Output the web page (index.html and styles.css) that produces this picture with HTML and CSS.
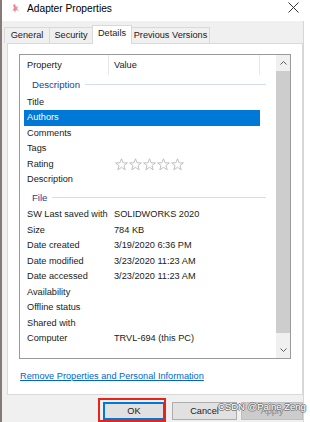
FILE: index.html
```html
<!DOCTYPE html>
<html>
<head>
  <title>Adapter Properties</title>
  <link rel="stylesheet" href="styles.css">
</head>
<body>
  <div class="window">
    <div class="titlebar">
      <svg class="app-icon" width="7" height="9" viewBox="0 0 7 9">
        <path d="M3 0 L4 3 L6 2 L5 5 L7 7 L4 6 L3 9 L2 6 L0 7 L2 4 L1 1 Z" fill="#e88a96"/>
      </svg>
      <span class="title">Adapter Properties</span>
      <svg class="close" width="11" height="11" viewBox="0 0 11 11">
        <path d="M0.5 0.5 L10.5 10.5 M10.5 0.5 L0.5 10.5" stroke="#333" stroke-width="1"/>
      </svg>
    </div>

    <div class="body">
      <div class="tabs">
        <div class="tab tab-general">General</div>
        <div class="tab tab-security">Security</div>
        <div class="tab tab-details active">Details</div>
        <div class="tab tab-prev">Previous Versions</div>
      </div>

      <div class="panel">
        <div class="listbox">
          <div class="list">
            <div class="header">
              <div class="hcell hcell-prop">Property</div>
              <div class="hcell hcell-value">Value</div>
            </div>

            <div class="group"><span>Description</span><i class="rule"></i></div>
            <div class="row"><span class="prop">Title</span><span class="val"></span></div>
            <div class="row selected"><span class="prop">Authors</span><span class="val"></span></div>
            <div class="row"><span class="prop">Comments</span><span class="val"></span></div>
            <div class="row"><span class="prop">Tags</span><span class="val"></span></div>
            <div class="row">
              <span class="prop">Rating</span>
              <span class="val">
                <svg class="stars" width="70" height="13" viewBox="0 0 70 13">
                  <g fill="none" stroke="#b9b9b9" stroke-width="0.9">
                    <polygon points="6.5,0.8 8.1,4.8 12.4,4.9 9,7.6 10.2,11.8 6.5,9.4 2.8,11.8 4,7.6 0.6,4.9 4.9,4.8"/>
                    <polygon transform="translate(14 0)" points="6.5,0.8 8.1,4.8 12.4,4.9 9,7.6 10.2,11.8 6.5,9.4 2.8,11.8 4,7.6 0.6,4.9 4.9,4.8"/>
                    <polygon transform="translate(28 0)" points="6.5,0.8 8.1,4.8 12.4,4.9 9,7.6 10.2,11.8 6.5,9.4 2.8,11.8 4,7.6 0.6,4.9 4.9,4.8"/>
                    <polygon transform="translate(42 0)" points="6.5,0.8 8.1,4.8 12.4,4.9 9,7.6 10.2,11.8 6.5,9.4 2.8,11.8 4,7.6 0.6,4.9 4.9,4.8"/>
                    <polygon transform="translate(56 0)" points="6.5,0.8 8.1,4.8 12.4,4.9 9,7.6 10.2,11.8 6.5,9.4 2.8,11.8 4,7.6 0.6,4.9 4.9,4.8"/>
                  </g>
                </svg>
              </span>
            </div>
            <div class="row"><span class="prop">Description</span><span class="val"></span></div>

            <div class="group"><span>File</span><i class="rule"></i></div>
            <div class="row"><span class="prop">SW Last saved with</span><span class="val">SOLIDWORKS 2020</span></div>
            <div class="row"><span class="prop">Size</span><span class="val">784 KB</span></div>
            <div class="row"><span class="prop">Date created</span><span class="val">3/19/2020 6:36 PM</span></div>
            <div class="row"><span class="prop">Date modified</span><span class="val">3/23/2020 11:23 AM</span></div>
            <div class="row"><span class="prop">Date accessed</span><span class="val">3/23/2020 11:23 AM</span></div>
            <div class="row"><span class="prop">Availability</span><span class="val"></span></div>
            <div class="row"><span class="prop">Offline status</span><span class="val"></span></div>
            <div class="row"><span class="prop">Shared with</span><span class="val"></span></div>
            <div class="row"><span class="prop">Computer</span><span class="val">TRVL-694 (this PC)</span></div>
          </div>

          <div class="scrollbar">
            <div class="arrow">
              <svg width="7" height="4" viewBox="0 0 7 4"><polyline points="0.5,3.5 3.5,0.5 6.5,3.5" fill="none" stroke="#606060"/></svg>
            </div>
            <div class="thumb"></div>
            <div class="track"></div>
            <div class="arrow">
              <svg width="7" height="4" viewBox="0 0 7 4"><polyline points="0.5,0.5 3.5,3.5 6.5,0.5" fill="none" stroke="#606060"/></svg>
            </div>
          </div>
        </div>

        <a class="link" href="#">Remove Properties and Personal Information</a>
      </div>

      <div class="buttons">
        <div class="btn btn-ok">OK</div>
        <div class="btn btn-cancel">Cancel</div>
        <div class="btn btn-apply">Apply</div>
      </div>
    </div>

    <div class="ok-mark"></div>
    <div class="watermark">CSDN @Paine Zeng</div>
  </div>
</body>
</html>
```

FILE: styles.css
```css
* {
  box-sizing: border-box;
}
body {
  margin: 0;
  background: #ffffff;
  font-family: "Liberation Sans", Arial, sans-serif;
  font-size: 9.2px;
  color: #1a1a1a;
}
.window {
  position: relative;
  width: 310px;
  height: 422px;
  border-left: 2px solid #85797a;
  overflow: hidden;
}

/* title bar */
.titlebar {
  height: 21px;
  display: flex;
  align-items: flex-start;
  padding-top: 3px;
  background: #ffffff;
}
.app-icon {
  margin-left: 10px;
  margin-top: 1px;
}
.title {
  margin-left: 8px;
  font-size: 10.2px;
  line-height: 11px;
  color: #000;
}
.close {
  margin-left: auto;
  margin-right: 11px;
  margin-top: -1px;
}

/* dialog body */
.body {
  width: 302px;
  height: 401px;
  background: #f0f0f0;
  border-right: 1px solid #d6d6d6;
}
.tabs {
  height: 22px;
  padding-top: 6px;
  padding-left: 2px;
  display: flex;
  align-items: flex-end;
}
.tab {
  height: 16px;
  line-height: 14px;
  text-align: center;
  border: 1px solid #d9d9d9;
  border-bottom: none;
  background: #f0f0f0;
  margin-right: -1px;
}
.tab-general { width: 46px; }
.tab-security { width: 44px; }
.tab-details { width: 40px; }
.tab-prev { width: 79px; }
.tab.active {
  position: relative;
  z-index: 1;
  height: 19px;
  margin-bottom: -1px;
  line-height: 15px;
  background: #ffffff;
}
.panel {
  margin-left: 5px;
  width: 296px;
  height: 352px;
  background: #ffffff;
  border: 1px solid #d9d9d9;
  padding-top: 10px;
}

/* list view */
.listbox {
  margin-left: 11px;
  width: 272px;
  height: 305px;
  border: 1px solid #9a9a9a;
  display: flex;
}
.list {
  width: 256px;
}
.header {
  height: 20px;
  display: flex;
  line-height: 20px;
}
.hcell-prop {
  width: 88px;
  padding-left: 7px;
}
.hcell-value {
  width: 152px;
  padding-left: 5px;
  border-left: 1px solid #e8e8e8;
  border-right: 1px solid #e8e8e8;
}
.group {
  height: 19.5px;
  display: flex;
  align-items: center;
  padding-left: 12px;
  color: #1f3c93;
  font-size: 9.6px;
}
.group .rule {
  flex: 1;
  height: 1px;
  margin-left: 5px;
  margin-right: 10px;
  background: #d2def3;
}
.row {
  margin-left: 4px;
  width: 236px;
  height: 15.5px;
  line-height: 15.5px;
  display: flex;
  white-space: nowrap;
}
.row.selected {
  background: #0078d7;
  color: #ffffff;
}
.prop {
  width: 90px;
  padding-left: 3px;
}
.val {
  display: flex;
  align-items: center;
}
.stars {
  margin-left: 1px;
}

/* scrollbar */
.scrollbar {
  width: 14px;
  background: #f0f0f0;
  display: flex;
  flex-direction: column;
}
.arrow {
  height: 16px;
  display: flex;
  align-items: center;
  justify-content: center;
}
.thumb {
  height: 262px;
  background: #cdcdcd;
}
.track {
  flex: 1;
}

.link {
  display: block;
  margin-top: 12px;
  margin-left: 12px;
  line-height: 11px;
  color: #0066cc;
  text-decoration: underline;
}

/* buttons */
.buttons {
  display: flex;
  justify-content: flex-end;
  padding-top: 7px;
}
.btn {
  height: 18px;
  line-height: 16px;
  text-align: center;
  background: #e1e1e1;
  border: 1px solid #adadad;
}
.btn-ok {
  width: 62px;
  border-color: #0078d7;
  box-shadow: inset 0 0 0 1px #0078d7;
}
.btn-cancel {
  width: 65px;
  margin-left: 7px;
}
.btn-apply {
  width: 62px;
  margin-left: 4px;
  background: #cccccc;
  border-color: #bfbfbf;
  color: #8a8a8a;
}

/* annotations over the screenshot */
.ok-mark {
  position: absolute;
  left: 96px;
  top: 398px;
  width: 68px;
  height: 24px;
  border: 2px solid #e8231b;
}
.watermark {
  position: absolute;
  left: 216px;
  top: 401px;
  font-size: 9.5px;
  color: #ffffff;
  text-shadow: 1px 0 0 #7a7a7a, -1px 0 0 #7a7a7a, 0 1px 0 #7a7a7a, 0 -1px 0 #7a7a7a;
}
```
